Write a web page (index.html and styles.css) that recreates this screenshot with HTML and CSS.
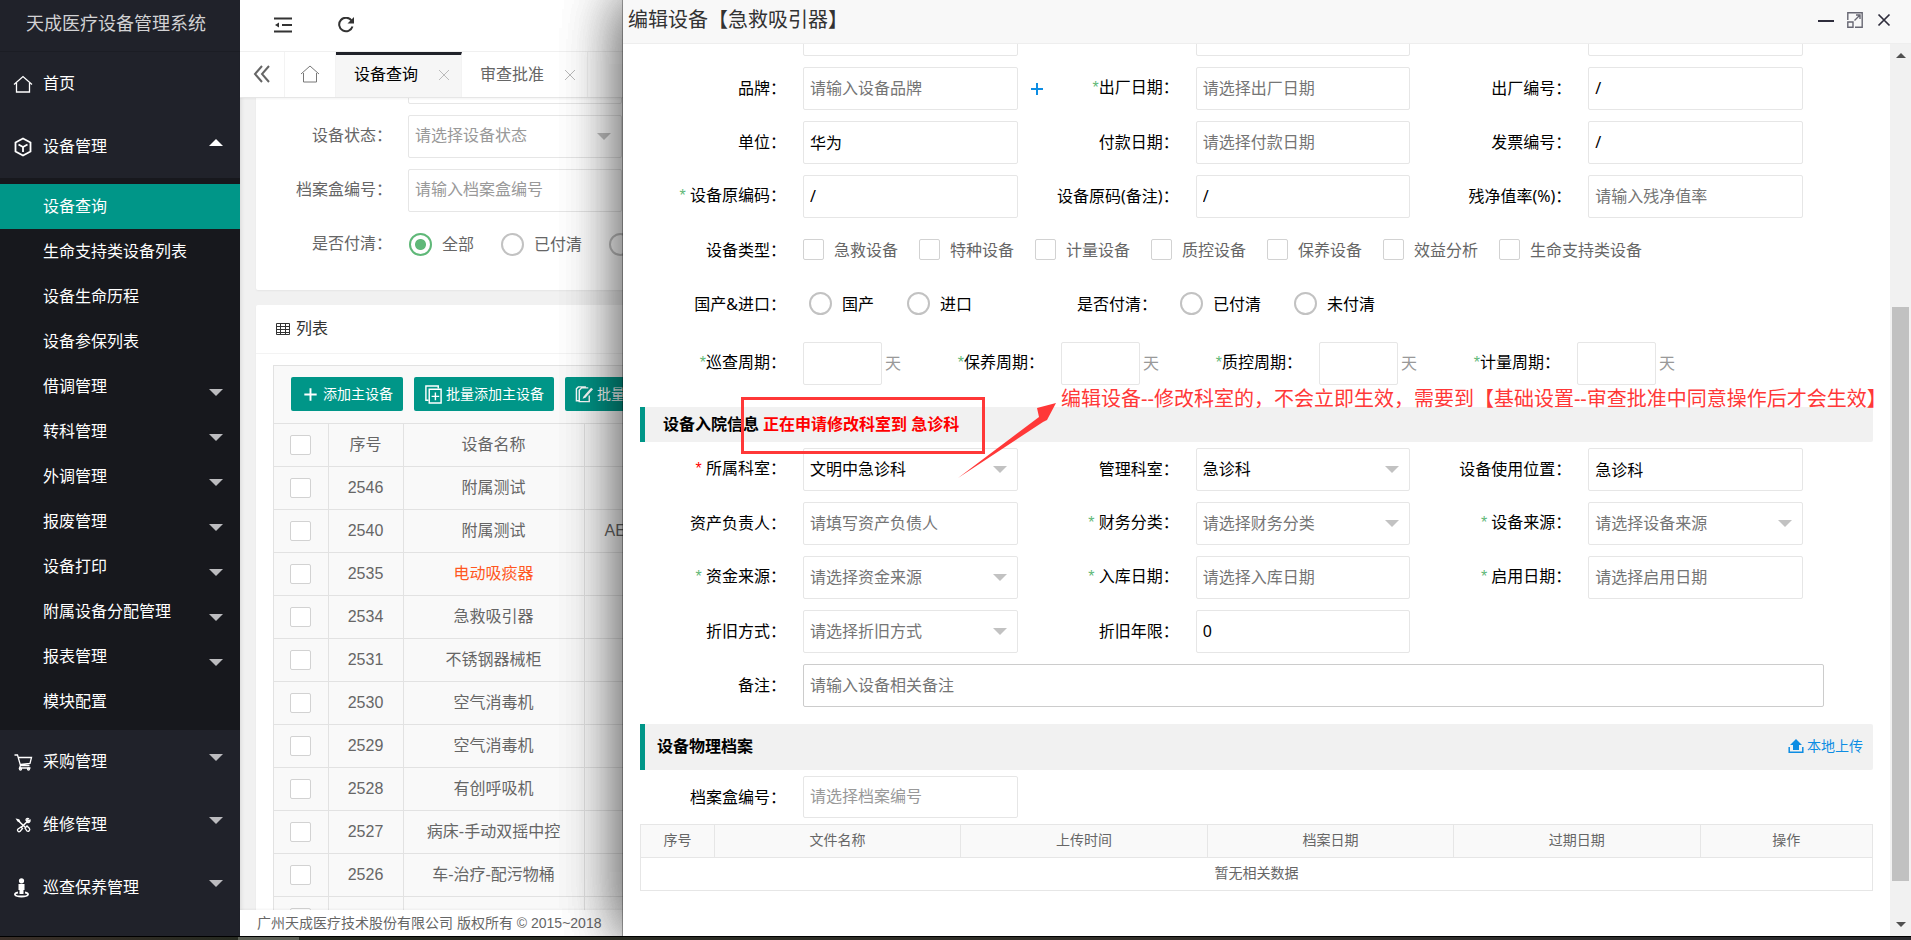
FILE: index.html
```html
<!DOCTYPE html>
<html lang="zh-CN">
<head>
<meta charset="utf-8">
<title>天成医疗设备管理系统</title>
<link rel="stylesheet" href="styles.css">
</head>
<body>
<div class="app">
  <aside class="sidebar">
    <h1 class="brand">天成医疗设备管理系统</h1>
    <nav class="menu">
      <a class="item" href="#"><svg class="ico" viewBox="0 0 20 20"><path d="M1 10.5 10 2.500l9 8M3.500 9v9h13V9"/></svg>首页</a>
      <a class="item" href="#"><svg class="ico" viewBox="0 0 20 20"><path class="w2" d="M10 1.500 17.500 5.500v9L10 18.500 2.500 14.500v-9zM5.500 7.500 10 10l4.500-2.500M10 10v5"/></svg>设备管理<i class="arrow up"></i></a>
      <div class="sub">
        <a class="on" href="#">设备查询</a>
        <a href="#">生命支持类设备列表</a>
        <a href="#">设备生命历程</a>
        <a href="#">设备参保列表</a>
        <a href="#">借调管理<i class="arrow"></i></a>
        <a href="#">转科管理<i class="arrow"></i></a>
        <a href="#">外调管理<i class="arrow"></i></a>
        <a href="#">报废管理<i class="arrow"></i></a>
        <a href="#">设备打印<i class="arrow"></i></a>
        <a href="#">附属设备分配管理<i class="arrow"></i></a>
        <a href="#">报表管理<i class="arrow"></i></a>
        <a href="#">模块配置</a>
      </div>
      <a class="item" href="#"><svg class="ico" viewBox="0 0 20 20"><path d="M1.500 3h3l3 10.500h9M5 5.500h13.500l-1.500 6-9.500 1M7.500 13.500l-1 2.500h11"/><circle cx="7.500" cy="17" r="1"/><circle cx="15.500" cy="17" r="1"/></svg>采购管理<i class="arrow"></i></a>
      <a class="item" href="#"><svg class="ico" viewBox="0 0 20 20"><path d="M4.500 5l7.500 7M15.500 5.500 8 12.500" stroke-width="1.600"/><path d="M13 5c0-1.500 1.500-2 2.500-1.500L14.500 5l1 1 1.500-1c.5 1.500-1 3-2.500 2.300zM12 13l2-2 2.500 2.500c1 1.500-1 3.500-2.500 2.500zM5 14l3-2 1.500 1.500-2.500 3c-1.500.8-3.500-1-2-2.500zM4 4.500l2 .5.500 1.500L5 6z"/></svg>维修管理<i class="arrow"></i></a>
      <a class="item" href="#"><svg class="ico" viewBox="0 0 20 20"><g fill="#fff" stroke="none"><circle cx="8.500" cy="2.800" r="2.600"/><path d="M5.500 6h6v6h-1v4h-4v-4h-1z"/></g><path class="w2" d="M5 14.500c-5 1-4 4 3.500 4s8.500-3 3.500-4"/></svg>巡查保养管理<i class="arrow"></i></a>
    </nav>
  </aside>

  <main class="main">
    <header class="topbar">
      <button class="tool" aria-label="收起菜单"><svg viewBox="0 0 18 16"><path d="M0 1.500h18M8 8h10M0 14.500h18" stroke-width="2"/><path d="M1 8l4-2.500v5z" fill="#333" stroke="none"/></svg></button>
      <button class="tool" aria-label="刷新"><svg viewBox="0 0 18 16"><path d="M14.500 3.500A6.800 6.800 0 1 0 15.500 9.500" stroke-width="2"/><path d="M17 0v6.500h-6.500z" fill="#333" stroke="none"/></svg></button>
    </header>
    <div class="tabs">
      <button class="tabctl" aria-label="向左"><svg viewBox="0 0 18 18" width="18" height="18"><path d="M9 1 2 9l7 8M16 1 9 9l7 8" stroke-width="2"/></svg></button>
      <button class="tabhome" aria-label="主页"><svg viewBox="0 0 20 20" width="20" height="20"><path d="M1 10 10 2l9 8M3.500 9v9h13V9"/></svg></button>
      <a class="tab active" href="#">设备查询<svg viewBox="0 0 10 10" width="10" height="10"><path d="M0 0l10 10M10 0 0 10"/></svg></a>
      <a class="tab" href="#">审查批准<svg viewBox="0 0 10 10" width="10" height="10"><path d="M0 0l10 10M10 0 0 10"/></svg></a>
    </div>
    <div class="content">
      <section class="card search">
        <div class="row"><span class="label"></span><input class="ctl" aria-label="关键字"></div>
        <div class="row"><label class="label" for="s1">设备状态：</label><div class="sel"><select class="ctl empty" id="s1"><option>请选择设备状态</option></select></div></div>
        <div class="row"><label class="label" for="s2">档案盒编号：</label><input class="ctl" id="s2" placeholder="请输入档案盒编号"></div>
        <div class="row"><span class="label">是否付清：</span>
          <div class="radios"><label><input type="radio" name="sp" checked>全部</label><label><input type="radio" name="sp">已付清</label><label><input type="radio" name="sp">未付清</label></div>
        </div>
      </section>
      <section class="card list">
        <h2 class="cardhead"><svg viewBox="0 0 14 12" width="14" height="12"><path d="M.5.5h13v11H.5zM0 3.500h14M0 6.500h14M0 9.500h14M4.500 0v12M9.500 0v12"/></svg>列表</h2>
        <div class="gridbox">
          <div class="gridtools">
            <button class="btn"><svg viewBox="0 0 20 20"><path d="M10 3.500v13M3.500 10h13" stroke-width="2"/></svg>添加主设备</button>
            <button class="btn"><svg viewBox="0 0 20 20"><path d="M4.500 16H2V1h13v2.500M5.500 4.500H18V19H5.500zM12 8v8M8 12h8" stroke-width="1.500"/></svg>批量添加主设备</button>
            <button class="btn"><svg viewBox="0 0 20 20"><path d="M4.500 16.500H1.500V4l2-2h8M14 3H7L4.500 5.500v12H15V11" stroke-width="1.500"/><path d="M9 12 17 3l2 1.500-8 9-3 1z" fill="#fff" stroke="none"/></svg>批量修改主设备</button>
          </div>
          <table class="grid">
            <thead><tr><th class="c1"><input type="checkbox" aria-label="全选"></th><th class="c2">序号</th><th class="c3">设备名称</th><th></th></tr></thead>
            <tbody>
              <tr><td><input type="checkbox" aria-label="选择"></td><td>2546</td><td>附属测试</td><td></td></tr>
              <tr><td><input type="checkbox" aria-label="选择"></td><td>2540</td><td>附属测试</td><td class="model">AE</td></tr>
              <tr><td><input type="checkbox" aria-label="选择"></td><td>2535</td><td class="warn">电动吸痰器</td><td></td></tr>
              <tr><td><input type="checkbox" aria-label="选择"></td><td>2534</td><td>急救吸引器</td><td></td></tr>
              <tr><td><input type="checkbox" aria-label="选择"></td><td>2531</td><td>不锈钢器械柜</td><td></td></tr>
              <tr><td><input type="checkbox" aria-label="选择"></td><td>2530</td><td>空气消毒机</td><td></td></tr>
              <tr><td><input type="checkbox" aria-label="选择"></td><td>2529</td><td>空气消毒机</td><td></td></tr>
              <tr><td><input type="checkbox" aria-label="选择"></td><td>2528</td><td>有创呼吸机</td><td></td></tr>
              <tr><td><input type="checkbox" aria-label="选择"></td><td>2527</td><td>病床-手动双摇中控</td><td></td></tr>
              <tr><td><input type="checkbox" aria-label="选择"></td><td>2526</td><td>车-治疗-配污物桶</td><td></td></tr>
              <tr><td><input type="checkbox" aria-label="选择"></td><td></td><td></td><td></td></tr>
            </tbody>
          </table>
        </div>
      </section>
    </div>
    <footer class="foot">广州天成医疗技术股份有限公司 版权所有 © 2015~2018</footer>
  </main>

  <div class="dialog" role="dialog" aria-labelledby="dt">
    <header class="dhead">
      <h2 id="dt">编辑设备【急救吸引器】</h2>
      <button aria-label="最小化"><svg viewBox="0 0 16 16"><path d="M0 9h16" stroke-width="2"/></svg></button>
      <button aria-label="最大化"><svg viewBox="0 0 16 16"><path d="M.8 8V.8h14.400v14.400H8M.8 10h5.200v5.200H.8zM7.500 8.500 13 3M9 3h4v4" stroke="#666672" stroke-width="1.400"/></svg></button>
      <button aria-label="关闭"><svg viewBox="0 0 16 16"><path d="M2.500 2.500l11 11M13.500 2.500l-11 11" stroke-width="1.700"/></svg></button>
    </header>
    <div class="dbody">
      <form class="form">
        <div class="cols cut">
          <div class="field"><span class="label"></span><input class="ctl" aria-label="名称"></div>
          <div class="field"><span class="label"></span><input class="ctl" aria-label="规格"></div>
          <div class="field"><span class="label"></span><input class="ctl" aria-label="型号"></div>
        </div>
        <div class="cols">
          <div class="field"><label class="label" for="f1">品牌：</label><input class="ctl" id="f1" placeholder="请输入设备品牌"><button type="button" class="plus" aria-label="添加品牌"><svg viewBox="0 0 14 14" width="14" height="14"><path d="M7 1v12M1 7h12" stroke-width="2"/></svg></button></div>
          <div class="field"><label class="label" for="f2"><b class="req">*</b>出厂日期：</label><input class="ctl" id="f2" placeholder="请选择出厂日期"></div>
          <div class="field"><label class="label" for="f3">出厂编号：</label><input class="ctl" id="f3" value="/"></div>
        </div>
        <div class="cols">
          <div class="field"><label class="label" for="f4">单位：</label><input class="ctl" id="f4" value="华为"></div>
          <div class="field"><label class="label" for="f5">付款日期：</label><input class="ctl" id="f5" placeholder="请选择付款日期"></div>
          <div class="field"><label class="label" for="f6">发票编号：</label><input class="ctl" id="f6" value="/"></div>
        </div>
        <div class="cols">
          <div class="field"><label class="label" for="f7"><b class="req">*</b> 设备原编码：</label><input class="ctl" id="f7" value="/"></div>
          <div class="field"><label class="label" for="f8">设备原码(备注)：</label><input class="ctl" id="f8" value="/"></div>
          <div class="field"><label class="label" for="f9">残净值率(%)：</label><input class="ctl" id="f9" placeholder="请输入残净值率"></div>
        </div>
        <div class="line"><span class="label">设备类型：</span>
          <div class="checks">
            <label><input type="checkbox">急救设备</label><label><input type="checkbox">特种设备</label><label><input type="checkbox">计量设备</label><label><input type="checkbox">质控设备</label><label><input type="checkbox">保养设备</label><label><input type="checkbox">效益分析</label><label><input type="checkbox">生命支持类设备</label>
          </div>
        </div>
        <div class="line"><span class="label">国产&amp;进口：</span>
          <div class="radios pair"><label><input type="radio" name="o">国产</label><label><input type="radio" name="o">进口</label></div>
          <span class="label">是否付清：</span>
          <div class="radios pair"><label><input type="radio" name="p">已付清</label><label><input type="radio" name="p">未付清</label></div>
        </div>
        <div class="line periods">
          <label class="label" for="p1"><b class="req">*</b>巡查周期：</label><input class="ctl" id="p1"><span class="unit">天</span>
          <label class="label" for="p2"><b class="req">*</b>保养周期：</label><input class="ctl" id="p2"><span class="unit">天</span>
          <label class="label" for="p3"><b class="req">*</b>质控周期：</label><input class="ctl" id="p3"><span class="unit">天</span>
          <label class="label" for="p4"><b class="req">*</b>计量周期：</label><input class="ctl" id="p4"><span class="unit">天</span>
        </div>
        <h3 class="bar bar-info">设备入院信息 <span class="pending">正在申请修改科室到 急诊科</span></h3>
        <div class="cols">
          <div class="field"><label class="label" for="g1"><b class="req red">*</b> 所属科室：</label><div class="sel"><select class="ctl" id="g1"><option>文明中急诊科</option></select></div></div>
          <div class="field"><label class="label" for="g2">管理科室：</label><div class="sel"><select class="ctl" id="g2"><option>急诊科</option></select></div></div>
          <div class="field"><label class="label" for="g3">设备使用位置：</label><input class="ctl" id="g3" value="急诊科"></div>
        </div>
        <div class="cols">
          <div class="field"><label class="label" for="g4">资产负责人：</label><input class="ctl" id="g4" placeholder="请填写资产负债人"></div>
          <div class="field"><label class="label" for="g5"><b class="req">*</b> 财务分类：</label><div class="sel"><select class="ctl empty" id="g5"><option>请选择财务分类</option></select></div></div>
          <div class="field"><label class="label" for="g6"><b class="req">*</b> 设备来源：</label><div class="sel"><select class="ctl empty" id="g6"><option>请选择设备来源</option></select></div></div>
        </div>
        <div class="cols">
          <div class="field"><label class="label" for="g7"><b class="req">*</b> 资金来源：</label><div class="sel"><select class="ctl empty" id="g7"><option>请选择资金来源</option></select></div></div>
          <div class="field"><label class="label" for="g8"><b class="req">*</b> 入库日期：</label><input class="ctl" id="g8" placeholder="请选择入库日期"></div>
          <div class="field"><label class="label" for="g9"><b class="req">*</b> 启用日期：</label><input class="ctl" id="g9" placeholder="请选择启用日期"></div>
        </div>
        <div class="cols">
          <div class="field"><label class="label" for="h1">折旧方式：</label><div class="sel"><select class="ctl empty" id="h1"><option>请选择折旧方式</option></select></div></div>
          <div class="field"><label class="label" for="h2">折旧年限：</label><input class="ctl" id="h2" value="0"></div>
        </div>
        <div class="line remark"><label class="label" for="h3">备注：</label><textarea class="ctl" id="h3" rows="1" placeholder="请输入设备相关备注"></textarea></div>
        <h3 class="bar bar-file">设备物理档案<a class="upload" href="#"><svg viewBox="0 0 16 16" width="16" height="16"><path d="M8 1l6 6h-3v5H5V7H2z" fill="#0d8de3" stroke="none"/><path d="M1.200 9v5.200h13.600V9" stroke-width="1.500"/></svg>本地上传</a></h3>
        <div class="cols">
          <div class="field"><label class="label" for="h4">档案盒编号：</label><input class="ctl pale" id="h4" placeholder="请选择档案编号"></div>
        </div>
        <table class="files">
          <thead><tr><th class="n">序号</th><th>文件名称</th><th>上传时间</th><th>档案日期</th><th>过期日期</th><th class="op">操作</th></tr></thead>
          <tbody><tr><td colspan="6">暂无相关数据</td></tr></tbody>
        </table>
      </form>
      <div class="scroll" aria-hidden="true"><i class="arrow up"></i><div class="track"><div class="thumb"></div></div><i class="arrow"></i></div>
      <div class="mark-box"></div>
      <svg class="mark-arrow" viewBox="0 0 100 76"><path d="M0 75 81 14 79 5 98 0 89 17 85 19Z"/></svg>
      <p class="mark-text">编辑设备--修改科室的，不会立即生效，需要到【基础设置--审查批准中同意操作后才会生效】</p>
    </div>
  </div>
</div>
<div class="edge"></div>
</body>
</html>
```

FILE: styles.css
```css
* { box-sizing: border-box; }
body {
  margin: 0;
  height: 100vh;
  display: flex;
  flex-direction: column;
  overflow: hidden;
  font: 16px/24px "Liberation Sans", "Noto Sans CJK SC", sans-serif;
  color: #666;
  background: #f1f1f1;
}
h1, h2, h3, p { margin: 0; font-weight: 400; }
a { color: inherit; text-decoration: none; }
button { border: 0; padding: 0; background: none; font: inherit; color: inherit; }
svg { fill: none; stroke: currentColor; flex: none; display: block; }

.app { flex: 1; min-height: 0; display: flex; position: relative; overflow: hidden; }
.edge {
  height: 4px;
  border-top: 1px solid #000;
  background: linear-gradient(90deg, #3a2f28 0, #262a20 238px, #5d6157 238px, #5d6157 299px, #25291f 299px, #33302a 60%, #2b2b2e);
}

.arrow { width: 14px; border: 7px solid transparent; border-bottom-width: 0; border-top-color: currentColor; }
.arrow.up { border-bottom: 7px solid currentColor; border-top-width: 0; }

/* sidebar */
.sidebar { width: 240px; flex: none; background: #20222a; color: #fff; }
.brand { height: 52px; padding-top: 8px; font-size: 18px; line-height: 32px; text-align: center; color: #d2d2d4; padding-right: 8px; border-bottom: 1px solid #1b1d24; }
.menu a { display: flex; align-items: center; padding: 0 17px 0 43px; }
.menu .item { height: 63px; padding-left: 13px; }
.ico { width: 20px; height: 20px; margin-right: 10px; stroke-width: 1.3; }
.w2 { stroke-width: 1.8; }
.menu .arrow { margin: 0 0 8px auto; border-top-color: #bcbcbf; }
.sub { padding: 6px 0; background: #17181d; }
.sub a { height: 45px; }
.sub a.on { background: #009688; }
.menu .sub .arrow { margin: 12px 0 0 auto; }

/* main */
.main { flex: 1; min-width: 0; display: flex; flex-direction: column; }
.topbar { height: 52px; flex: none; display: flex; align-items: center; gap: 45px; padding: 0 0 2px 34px; background: #fff; border-bottom: 1px solid #f0f0f0; color: #333; }
.tool svg { width: 18px; height: 16px; }
.tabs { height: 46px; flex: none; display: flex; background: #fff; border-bottom: 1px solid #e6e6e6; box-shadow: 0 1px 2px #0000000d; z-index: 1; }
.tabctl, .tabhome { display: grid; place-items: center; padding-bottom: 2px; border-right: 1px solid #f3f3f3; }
.tabctl { width: 45px; }
.tabhome { width: 51px; }
.tabhome svg { color: #777; }
.tab { display: flex; align-items: center; gap: 21px; padding: 3px 12px 3px 18px; border-right: 1px solid #f3f3f3; }
.tab svg { color: #bbb; }
.tab.active { background: #f6f6f6; color: #000; border-top: 3px solid #20222a; padding-top: 0; }
.content { flex: 1; min-height: 0; overflow: hidden; padding-left: 16px; box-shadow: inset 5px 0 4px -4px #0000001a; }
.card { background: #fff; border-radius: 2px; margin-bottom: 15px; box-shadow: 0 1px 2px #0000000d; }
.search { margin-top: -37px; padding-bottom: 24px; display: grid; gap: 11px; }
.row { display: flex; height: 43px; align-items: center; }
.label { flex: none; text-align: right; padding: 0 17px 2px 0; white-space: nowrap; }
.search .label { width: 152px; padding-right: 16px; }
.search .ctl { width: 214px; flex: none; }
.search .radios { padding-left: 1px; }
.ctl {
  height: 43px; min-width: 0; width: 100%;
  border: 1px solid #e6e6e6; border-radius: 2px; background: #fff;
  padding: 0 6px 1px; font: inherit; color: #000; appearance: none; display: block; outline: 0;
}
.ctl::placeholder { color: #757575; opacity: 1; }
.ctl.empty { color: #757575; }
.search .ctl.empty, .search .ctl::placeholder, .pale::placeholder { color: #999; }
.sel { position: relative; flex: 1; min-width: 0; }
.search .sel { flex: none; }
.sel::after { content: ""; position: absolute; right: 11px; top: 18px; border: 7px solid transparent; border-top-color: #c2c2c2; border-bottom-width: 0; pointer-events: none; }
.radios { display: flex; gap: 27px; }
.radios label, .checks label { display: flex; align-items: center; white-space: nowrap; }
.radios label { gap: 10px; }
input[type="radio"] { appearance: none; flex: none; width: 23px; height: 23px; margin: 0; border: 2px solid #c2c2c2; border-radius: 50%; background: #fff; }
input[type="radio"]:checked { border-color: #5fb878; background: radial-gradient(circle, #5fb878 5px, #fff 6px); }
input[type="checkbox"] { appearance: none; flex: none; display: block; width: 21px; height: 21px; margin: 0; border: 1px solid #d2d2d2; border-radius: 2px; background: #fff; }

.cardhead { display: flex; align-items: center; gap: 6px; height: 49px; padding-left: 20px; font-size: 16px; color: #333; border-bottom: 1px solid #f3f3f3; }
.gridbox { margin: 11px 0 0 17px; background: #f9f9f9; border: 1px solid #e2e2e2; }
.gridtools { display: flex; gap: 11px; height: 57px; padding: 11px 17px; }
.btn { height: 34px; display: flex; align-items: center; gap: 3px; flex: none; padding: 0 10px; border-radius: 2px; background: #009688; color: #fff; font-size: 14px; }
.btn svg { width: 19px; height: 19px; }
.grid { width: 100%; table-layout: fixed; border-collapse: collapse; }
.grid th, .grid td { height: 43px; padding: 0; border: 1px solid #e2e2e2; border-left: 0; font-weight: 400; text-align: center; }
.grid .c1 { width: 54px; }
.grid .c2 { width: 75px; }
.grid .c3 { width: 181px; }
.grid input { height: 20px; margin: 0 auto 1px; }
.grid .model { text-align: left; padding-left: 20px; }
.grid .warn { color: #ff5722; }
.foot { height: 26px; flex: none; padding-left: 17px; background: #fff; font-size: 14px; line-height: 26px; box-shadow: 0 -1px 2px #0000000d; z-index: 1; }

/* dialog */
.dialog {
  position: absolute; z-index: 5; top: 0; right: 0; bottom: 0; left: 623px;
  display: flex; flex-direction: column; background: #fff; color: #000;
  box-shadow: 0 0 0 1px #0000004d, 0 0 56px #0000004d, 0 0 56px #0000004d, 0 0 56px #0000004d;
  font-family: "Noto Sans", "Noto Sans CJK SC", sans-serif;
}
.dhead { height: 44px; flex: none; display: flex; align-items: center; gap: 13px; padding: 0 19px 4px 5px; background: #f8f8f8; border-bottom: 1px solid #eee; color: #2e2d3c; }
.dhead h2 { flex: 1; font-size: 20px; color: #333; }
.dhead svg { width: 16px; height: 16px; }
.dbody { flex: 1; min-height: 0; display: flex; overflow: hidden; position: relative; }
.form { flex: 1; min-width: 0; padding: 0 17px; }
.cols { display: grid; grid-template-columns: repeat(3, 1fr); margin: 0 55px 11px 0; }
.cut { margin-top: -31px; }
.field, .line { display: flex; align-items: center; height: 43px; }
.field { padding-right: 15px; }
.form .label { width: 163px; }
.req { font-family: "Liberation Sans", sans-serif; font-weight: 400; color: #5fb878; }
.req.red { color: #f00; }
.plus { flex: none; width: 38px; margin-right: -38px; display: grid; place-items: center; color: #0d8de3; }
.line { margin-bottom: 11px; }
.checks { display: flex; gap: 21px; padding-bottom: 2px; color: #666; }
.checks label { gap: 10px; }
.pair { flex: 0 0 208px; padding: 0 0 2px 6px; gap: 33px; }
.periods { margin: 16px 0 22px; }
.periods .ctl { flex: 0 0 79px; width: 79px; }
.periods .label:not(:first-child) { width: 155px; }
.unit { width: 24px; padding: 0 0 2px 3px; flex: none; color: #999; }
.bar { display: flex; align-items: center; margin-bottom: 6px; background: #f1f1f1; border-left: 5px solid #009688; border-radius: 0 2px 2px 0; font-size: 16px; font-weight: 700; }
.bar-info { height: 35px; padding: 0 0 2px 18px; gap: 4px; }
.pending { color: #f00; }
.bar-file { height: 46px; padding: 0 10px 2px 12px; }
.upload { margin-left: auto; display: flex; align-items: center; gap: 3px; font-size: 14px; font-weight: 400; color: #0d8de3; }
.remark { margin: 0 49px 17px 0; }
.remark .ctl { padding: 8px 6px; resize: none; overflow: hidden; border-color: #ccc; }
.bar-file + .cols { margin-bottom: 5px; }
.bar-file + .cols .ctl { height: 42px; margin-bottom: 1px; padding-bottom: 3px; }
.files { width: 100%; table-layout: fixed; border-collapse: collapse; font-size: 14px; line-height: 20px; color: #666; }
.files th, .files td { height: 33px; padding: 0 0 2px; border: 1px solid #e6e6e6; font-weight: 400; text-align: center; }
.files th { background: #f9f9f9; }
.files .n { width: 6%; }
.files .op { width: 14%; }
.scroll { width: 21px; flex: none; display: flex; flex-direction: column; align-items: center; padding: 9px 2px; background: #f1f1f1; color: #505050; }
.scroll .arrow { width: 10px; border-left-width: 5px; border-right-width: 5px; border-top-width: 5px; }
.scroll .arrow.up { border-top-width: 0; border-bottom-width: 5px; }
.track { flex: 1; width: 100%; display: flex; flex-direction: column; padding: 7px 0; }
.thumb { margin-top: auto; margin-bottom: 34px; height: 67.5%; background: #c1c1c1; }

/* callout drawn over the form */
.mark-box { position: absolute; left: 118px; top: 353px; width: 244px; height: 57px; border: 3px solid #ff3838; }
.mark-arrow { position: absolute; left: 335px; top: 359px; width: 100px; height: 76px; }
.mark-arrow path { fill: #ff3838; stroke: none; }
.mark-text { position: absolute; left: 438px; top: 340px; font-size: 20px; line-height: 30px; white-space: nowrap; color: #ff3838; }
```
